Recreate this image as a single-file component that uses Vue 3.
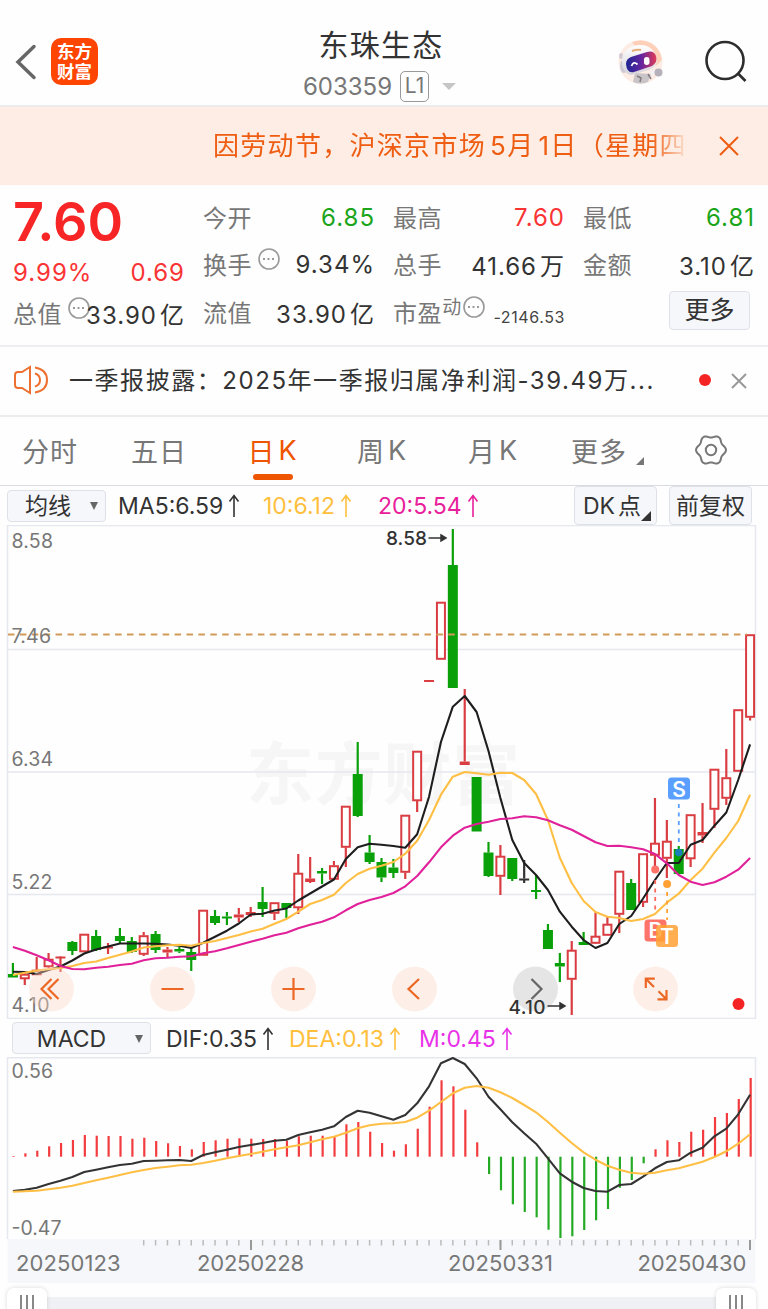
<template>
  <div class="stock-page">
    <header class="header">
      <div class="header__left">
        <svg class="header__back" width="22" height="36" viewBox="0 0 22 36">
          <path d="M19 2.500 3 18l16 15.500" />
        </svg>
        <div class="logo"><span>东方</span><span>财富</span></div>
      </div>
      <div class="header__center">
        <h1>东珠生态</h1>
        <div class="header__code">
          <span class="header__number">603359</span>
          <span class="header__level">L1</span>
          <i class="header__caret"></i>
        </div>
      </div>
      <div class="header__right">
        <svg width="48" height="48" viewBox="0 0 48 48">
          <defs>
            <linearGradient id="visor" x1="0" y1="0" x2="1" y2="0">
              <stop offset="0" stop-color="#1c2592" />
              <stop offset="0.5" stop-color="#63259f" />
              <stop offset="1" stop-color="#e23b56" />
            </linearGradient>
            <linearGradient id="shell" x1="0" y1="0" x2="0" y2="1">
              <stop offset="0" stop-color="#fff" />
              <stop offset="1" stop-color="#d5d3da" />
            </linearGradient>
          </defs>
          <circle cx="23.500" cy="24" r="22" fill="#fdece4" />
          <path d="M15 4a22 22 0 0 1 30 18l-6 6-18-16z" fill="#ffd0b8" />
          <path d="M18 35l-2 9q7 3 15 0l3-8z" fill="#c9c4c8" />
          <path d="M20 38l4 2-1 4M31 36l3 5" fill="none" stroke="#847b80" stroke-width="1.500" />
          <path d="M33 33l5-1 1 4-5 2z" fill="#f3f1f4" />
          <circle cx="41.500" cy="34.500" r="4" fill="#b6b1ba" />
          <ellipse cx="7" cy="28" rx="4" ry="7" fill="#cdc9d4" />
          <ellipse cx="4" cy="18" rx="2" ry="3" fill="#d2c8d2" />
          <path d="M5 25C4 14 12 8 22 7s18 7 18 16q-1 6-8 9l-18 5Q6 35 5 25z" fill="url(#shell)" />
          <path d="M15 13q5-2 9-1" fill="none" stroke="#e9ae77" stroke-width="2" />
          <path
            d="M9 26q0-5 5-7l16-5q7-2 9 4t-4 10l-18 6q-7 2-8-8z"
            fill="url(#visor)"
          />
          <path d="M14.500 28q2-5.500 6-1.500" fill="none" stroke="#fff" stroke-width="1.800" />
          <rect x="27" y="19" width="5.500" height="8" rx="2.700" fill="#fff" />
        </svg>
        <svg width="44" height="44" viewBox="0 0 44 44" class="header__search">
          <circle cx="21" cy="20.500" r="18.500" />
          <path d="m33.500 33 8 8" />
        </svg>
      </div>
    </header>

    <div class="banner">
      <div class="banner__text">因劳动节，沪深京市场<b>5</b>月<b>1</b>日（星期四）</div>
      <svg width="22" height="22" viewBox="0 0 22 22"><path d="m2 2 18 18M20 2 2 20" /></svg>
    </div>

    <section class="quote">
      <div class="quote__col">
        <div class="quote__price">7.60</div>
        <div class="quote__row quote__row--change is-up"><span>9.99%</span><span>0.69</span></div>
        <div class="quote__row quote__row--total">
          <label>总值</label>
          <svg class="dots" viewBox="0 0 22 22"><circle cx="11" cy="11" r="10" /><path d="M5 11h12" /></svg>
          <span>33.90<em>亿</em></span>
        </div>
      </div>
      <div class="quote__col">
        <div class="quote__row"><label>今开</label><span class="is-down">6.85</span></div>
        <div class="quote__row">
          <label>换手</label>
          <svg class="dots" viewBox="0 0 22 22"><circle cx="11" cy="11" r="10" /><path d="M5 11h12" /></svg>
          <span>9.34%</span>
        </div>
        <div class="quote__row"><label>流值</label><span>33.90<em>亿</em></span></div>
      </div>
      <div class="quote__col">
        <div class="quote__row"><label>最高</label><span class="is-up">7.60</span></div>
        <div class="quote__row"><label>总手</label><span>41.66<em>万</em></span></div>
        <div class="quote__row">
          <label>市盈<sup>动</sup></label>
          <svg class="dots dots--tight" viewBox="0 0 22 22"><circle cx="11" cy="11" r="10" /><path d="M5 11h12" /></svg>
          <span class="quote__small">-2146.53</span>
        </div>
      </div>
      <div class="quote__col">
        <div class="quote__row"><label>最低</label><span class="is-down">6.81</span></div>
        <div class="quote__row"><label>金额</label><span>3.10<em>亿</em></span></div>
        <div class="quote__row"><button class="quote__more">更多</button></div>
      </div>
    </section>

    <div class="news">
      <svg width="36" height="32" viewBox="0 0 36 32" class="news__icon">
        <path d="M17 3v26l-8-5H5q-3 0-3-3V11q0-3 3-3h4z" />
        <path d="M22 9.500q5 1.500 5 6.500t-5 6.500M22 3.500q12 2 12 12.500T22 28.500" />
      </svg>
      <p>一季报披露：<b>2025</b>年一季报归属净利润<b>-39.49</b>万<b>...</b></p>
      <i class="news__dot"></i>
      <svg width="18" height="18" viewBox="0 0 18 18" class="news__close"><path d="m2 2 14 14M16 2 2 16" /></svg>
    </div>

    <nav class="tabs">
      <div v-for="tab in tabs" :key="tab.name" class="tabs__item" :class="{ 'is-active': tab.active }">
        {{ tab.name }}<b v-if="tab.k">K</b><i v-if="tab.more" class="tabs__corner"></i>
      </div>
      <div class="tabs__item">
        <svg width="34" height="34" viewBox="-17 -17 34 34" class="tabs__gear">
          <polygon :points="gear" />
          <circle r="5.200" />
        </svg>
      </div>
    </nav>

    <div class="indicator">
      <button class="select select--ma">均线<i></i></button>
      <span class="indicator__value ma5">MA5:6.59<Arrow /></span>
      <span class="indicator__value ma10">10:6.12<Arrow /></span>
      <span class="indicator__value ma20">20:5.54<Arrow /></span>
      <div class="indicator__buttons">
        <button class="select select--dk"><b>DK</b>点<i></i></button>
        <button class="select select--fq">前复权</button>
      </div>
    </div>

    <svg class="chart" width="768" height="494" viewBox="0 525 768 494">
      <text class="watermark" x="246" y="799" textLength="274">东方财富</text>
      <path class="grid" d="M7.500 525.500h748v493h-748zM8 649.500h747M8 772h747M8 894.500h747" />

      <g v-for="(c, i) in candles" :key="i" :class="['candle', 'candle--' + c[0]]">
        <path v-if="c[1] < c[2]" :d="`M${x(i)} ${c[1]}V${c[2]}`" />
        <path v-if="c[4] > c[3]" :d="`M${x(i)} ${c[3]}V${c[4]}`" />
        <rect
          :x="x(i) - (c[0] === 'r' ? 4 : 5)"
          :y="c[2] + (c[0] === 'r' ? 0.7 : 0)"
          :width="c[0] === 'r' ? 8 : 10"
          :height="Math.max(c[3] - c[2] - (c[0] === 'r' ? 1.4 : 0), 2)"
        />
      </g>

      <path class="last-price" d="M8 634.500H747" />
      <polyline class="line line--ma5" :points="points(ma5)" />
      <polyline class="line line--ma10" :points="points(ma10)" />
      <polyline class="line line--ma20" :points="points(ma20)" />

      <g class="signal signal--s">
        <path d="M678.800 804v40" />
        <circle cx="678.800" cy="852.500" r="3.800" />
        <rect x="668" y="777.500" width="22" height="22" rx="3.500" />
        <text x="679" y="796.500">S</text>
      </g>
      <g class="signal signal--b">
        <path d="M655.200 880v34" />
        <circle cx="655.200" cy="869.500" r="4" />
        <rect x="644.500" y="919.500" width="22" height="22" rx="3.500" />
        <text x="655.500" y="938">B</text>
      </g>
      <g class="signal signal--t">
        <path d="M667.100 892v28" />
        <circle cx="667.100" cy="884" r="4" />
        <rect x="656" y="925" width="22" height="22" rx="3.500" />
        <text x="667" y="943.500">T</text>
      </g>

      <g class="scale">
        <text x="11.500" y="547.500" textLength="41.500">8.58</text>
        <text x="11.500" y="642.500" textLength="39.500">7.46</text>
        <text x="11.500" y="765.500" textLength="41.500">6.34</text>
        <text x="11.500" y="889" textLength="41">5.22</text>
        <text x="11.500" y="1011.500" textLength="38">4.10</text>
      </g>

      <g class="control">
        <circle v-for="cx in [51.5, 172.5, 293.5, 414.5, 655.5]" :key="cx" :cx="cx" cy="989" r="22.500" />
        <circle class="control__gray" cx="535.500" cy="989" r="22.500" />
        <path d="M51.500 979 41.500 989l10 10M58.500 979 48.500 989l10 10" />
        <path d="M161.500 989h22M282.500 989h22M293.500 978v22" />
        <path d="M419 979 408.500 989l10.500 10" />
        <path class="control__next" d="M531.500 979 541.500 989l-10 10" />
        <path d="M645.800 988v-9.300h9M646 979l8 8M657.500 999.300h9V990M666.500 999.300l-8-8" />
      </g>

      <g class="extreme">
        <text x="386" y="545" textLength="41">8.58</text>
        <path d="M428.500 538h13M441 535l5 3-5 3z" />
        <text x="508.500" y="1013.500" textLength="37">4.10</text>
        <path d="M547.500 1006h13M560 1003l5 3-5 3z" />
      </g>
      <circle cx="738.500" cy="1004" r="6" fill="#f42424" />
    </svg>

    <div class="indicator indicator--macd">
      <button class="select select--macd">MACD<i></i></button>
      <span class="indicator__value dif">DIF:0.35<Arrow /></span>
      <span class="indicator__value dea">DEA:0.13<Arrow /></span>
      <span class="indicator__value m">M:0.45<Arrow /></span>
    </div>

    <svg class="chart" width="768" height="182" viewBox="0 1057 768 182">
      <path class="grid" d="M7.500 1240V1057.700h748V1240" />
      <path
        v-for="(v, i) in macd"
        :key="i"
        :class="['bar', v < 410 ? 'bar--up' : 'bar--down']"
        :d="`M${x(i) + 0.6} 1156.700V${zoomed(v)}`"
      />
      <polyline class="line line--dif" :points="points(dif.map(zoomed))" />
      <polyline class="line line--ma10" :points="points(dea.map(zoomed))" />
      <g class="scale">
        <text x="11.500" y="1077.500" textLength="41.500">0.56</text>
        <text x="11.500" y="1235" textLength="50">-0.47</text>
      </g>
    </svg>

    <svg class="chart" width="768" height="44" viewBox="0 1239 768 44">
      <rect x="7.500" y="1239" width="748" height="44" fill="#f6f7fa" />
      <path v-for="n in 51" :key="n" class="tick" :d="`M${x(n + 10)} 1240v5.500`" />
      <path class="tick tick--major" d="M251 1240v10M500.500 1240v10M750 1240v10" />
      <g class="dates">
        <text x="16" y="1271" textLength="104.500">20250123</text>
        <text x="197" y="1271" textLength="107">20250228</text>
        <text x="448" y="1271" textLength="105">20250331</text>
        <text x="637.500" y="1271" textLength="109">20250430</text>
      </g>
    </svg>

    <div class="slider">
      <div class="slider__track">
        <div class="slider__handle"><i></i><i></i><i></i></div>
        <div class="slider__handle"><i></i><i></i><i></i></div>
      </div>
    </div>
  </div>
</template>

<script setup>
import { h } from "vue";

const Arrow = () =>
  h("svg", { class: "arrow", width: 12, height: 24, viewBox: "0 0 12 24" }, [
    h("path", { d: "M6 23V2M1.500 7.500 6 1.500l4.500 6", fill: "none", stroke: "currentColor", "stroke-width": 1.6 }),
  ]);

const tabs = [
  { name: "分时" },
  { name: "五日" },
  { name: "日", k: true, active: true },
  { name: "周", k: true },
  { name: "月", k: true },
  { name: "更多", more: true },
];

// six-lobed outline of the settings icon
const gear = Array.from({ length: 72 }, (_, n) => {
  const a = (n / 72) * Math.PI * 2;
  const r = 13.7 + 1.3 * Math.cos(6 * a);
  return `${(r * Math.cos(a)).toFixed(2)},${(r * Math.sin(a)).toFixed(2)}`;
}).join(" ");

const x = (i) => +(12.9 + i * 11.89).toFixed(2);
const points = (list) => list.map((y, i) => `${x(i)},${y}`).join(" ");
const zoomed = (v) => +(1020 + v / 3).toFixed(1);

// [kind, high, bodyTop, bodyBottom, low]; r = hollow up, s = solid up, g = down, k = flat
const candles = [
  ["g", 963, 974, 977.5, 977.5], ["r", 973, 974, 979, 985], ["r", 957, 970, 975, 975],
  ["r", 953, 959, 967, 968], ["s", 956, 956.5, 958, 972], ["g", 941, 942, 951, 955],
  ["r", 934, 934, 952, 952], ["g", 930, 936, 950, 951], ["s", 943, 946.5, 948, 954],
  ["g", 928, 936, 941, 943], ["g", 937, 941, 952, 953], ["r", 932, 935.5, 954.5, 956],
  ["g", 931, 934, 950, 953], ["s", 947, 949.5, 952.5, 957], ["g", 947, 949, 951.5, 953],
  ["g", 948, 952, 960, 971], ["r", 910, 910, 955.5, 955.5], ["g", 910, 916, 923, 925],
  ["g", 912, 916.5, 918, 925], ["s", 908, 914.5, 917.5, 922], ["s", 907, 912, 915, 917],
  ["g", 887, 902, 909, 917], ["r", 902.5, 902.5, 913.5, 920], ["g", 903, 903, 908, 918],
  ["r", 854, 873, 908, 914], ["s", 857, 878.5, 882, 883], ["g", 868, 871, 873.5, 884],
  ["r", 861, 865.5, 879.5, 879.5], ["r", 806, 806, 847.5, 867], ["g", 742, 774, 816, 817],
  ["g", 835, 852.5, 862, 864], ["g", 858, 862, 877.5, 882], ["g", 859, 867.5, 873, 878],
  ["r", 815, 815, 872.5, 879], ["r", 751, 751, 801, 812], ["s", 680, 680, 681.5, 681],
  ["r", 602, 602, 659.5, 659], ["g", 529, 565, 688, 688], ["s", 689, 761.5, 765, 765],
  ["g", 777, 777, 831.5, 831], ["g", 842, 852.5, 876, 877], ["r", 845, 856, 876.5, 895],
  ["g", 858, 858, 879, 881], ["k", 860, 878.5, 879.5, 883], ["g", 875, 890, 891.5, 899],
  ["g", 924, 930, 949, 949], ["g", 953, 963, 966.5, 982], ["r", 941, 950, 979.5, 1015],
  ["g", 932, 942, 945, 945], ["r", 912.5, 936, 943.5, 944], ["r", 917, 924, 935.5, 935],
  ["r", 871, 871, 914.5, 933], ["g", 879, 883, 910, 910], ["r", 853.5, 853.5, 902.5, 907],
  ["r", 798, 843, 855.5, 868], ["r", 820, 841, 858.5, 878], ["g", 846, 849, 874, 874],
  ["r", 814.5, 814.5, 859, 867], ["s", 803, 832, 835.5, 843], ["r", 769, 769, 809.5, 828],
  ["r", 749, 777.5, 798.5, 805], ["r", 709.5, 709.5, 771.5, 771], ["r", 634.5, 634.5, 717.5, 720.5],
];

const ma5 = [
  971.7, 972, 974, 970, 966.5, 960.5, 953.5, 949.5, 946.5, 943.5, 943.5, 943.5, 943.7, 944.5, 945.7,
  948, 942.7, 936.7, 930.7, 923.5, 914.5, 913.7, 910.5, 908.5, 900.5, 893.5, 886.5, 879.5, 859, 847.3,
  843.7, 844.7, 846, 847.7, 834.3, 796.7, 742, 706.7, 696, 712, 751, 798, 840, 863, 875, 890, 911.7,
  926.7, 940, 948, 943, 924, 916, 898.5, 880, 863, 863, 844.7, 840, 825.7, 812.5, 780, 744.3,
];
const ma10 = [
  975, 972.7, 970.5, 969.3, 968, 966, 963, 961.5, 958, 954.7, 951.5, 947.5, 946.3, 945.3, 944.7,
  945.7, 943, 941, 938, 935, 931.5, 928.7, 923.7, 919, 911.7, 904, 900, 894.7, 883, 874, 868.7, 865.7,
  862, 853.7, 840.7, 820, 794.7, 776.7, 772, 773.3, 774.7, 772.7, 773, 780, 794, 820, 857.7, 883, 901,
  912, 916.7, 918, 921, 919, 914, 902.7, 893.7, 880, 868.7, 852.7, 838, 821, 794.7,
];
const ma20 = [
  947, 950.7, 955.3, 960.3, 966, 969, 969.3, 967.7, 966.7, 965, 963.7, 960.3, 958.3, 957.7, 956.7,
  956.3, 953.3, 951.3, 948.3, 945, 941.7, 938.7, 935.3, 932.7, 928.3, 924.7, 921.7, 917.3, 910.3, 904,
  900, 897, 893, 886.3, 876, 862.3, 847.3, 835.7, 827.7, 824, 821.7, 819, 818.3, 816.3, 817.3, 820.3,
  825.3, 829.7, 836, 842.3, 846, 845.7, 847.3, 849.3, 854, 863.3, 875, 881.7, 885, 882.3, 876.7, 869.7, 858,
];

// MACD series on a 3x grid, zero at 410
const macd = [
  408, 400, 392, 379, 369, 360, 345, 347, 348, 348, 356, 353, 363, 370, 378, 388, 366, 361, 356, 355,
  356, 357, 357, 362, 349, 347, 347, 348, 313, 306, 335, 369, 392, 373, 326, 260, 181, 199, 269, 367,
  462, 511, 553, 576, 592, 629, 654, 649, 630, 601, 567, 503, 480, 430, 388, 361, 366, 335, 329, 291,
  279, 237, 174,
];
const dif = [
  513, 509, 503, 492, 482, 471, 456, 449, 442, 435, 431, 423, 422, 421, 420, 423, 405, 397, 389, 381,
  375, 369, 362, 359, 345, 337, 329, 319, 291, 272, 278, 289, 299, 285, 250, 199, 130, 114, 132, 175,
  230, 268, 307, 340, 371, 415, 460, 485, 504, 513, 515, 495, 492, 470, 445, 426, 421, 398, 383, 349,
  326, 283, 224,
];
const dea = [
  515, 514, 512, 508, 503, 497, 489, 481, 473, 465, 457, 450, 444, 440, 436, 434, 429, 422, 415, 408,
  402, 395, 388, 382, 376, 367, 358, 350, 338, 325, 316, 311, 310, 306, 293, 272, 246, 220, 203, 198,
  203, 217, 234, 255, 277, 306, 338, 369, 397, 419, 437, 449, 458, 461, 458, 451, 445, 435, 425, 411,
  394, 371, 343,
];
</script>

<style>
body {
  margin: 0;
  background: #fefefe;
}
</style>

<style scoped>
.stock-page {
  width: 768px;
  height: 1309px;
  overflow: hidden;
  background: #fefefe;
  color: #333;
  font-family: Inter, "Noto Sans CJK SC", sans-serif;
}

.stock-page * {
  box-sizing: border-box;
}

.stock-page svg {
  display: block;
  flex: none;
}

b,
em,
i {
  font-style: normal;
  font-weight: 400;
}

button {
  font-family: inherit;
}

.header {
  display: grid;
  grid-template-columns: 1fr 160px 1fr;
  height: 107px;
  border-bottom: 2px solid #ebebed;
}

.header__left {
  display: flex;
  align-items: center;
  gap: 14px;
  padding: 18px 0 0 15px;
}

.header__back {
  fill: none;
  stroke: #666;
  stroke-width: 3.5;
  stroke-linecap: round;
}

.logo {
  display: flex;
  flex-direction: column;
  align-items: center;
  justify-content: center;
  width: 47px;
  height: 47px;
  border-radius: 10px;
  background: #ff4502;
  color: #fff;
  font-size: 17.5px;
  font-weight: 700;
  line-height: 20px;
}

.header__center {
  display: flex;
  flex-direction: column;
  align-items: center;
}

.header__center h1 {
  margin: 24px 6px 0 0;
  font-size: 30px;
  font-weight: 400;
  line-height: 42px;
  letter-spacing: 1.2px;
  white-space: nowrap;
}

.header__code {
  display: flex;
  align-items: center;
  gap: 8px;
  margin: 5px 9px 0 0;
  color: #777;
}

.header__number {
  font-size: 24px;
  line-height: 30px;
}

.header__level {
  width: 29px;
  height: 31px;
  border: 1.5px solid #999;
  border-radius: 5px;
  font-size: 21px;
  line-height: 28px;
  text-align: center;
}

.header__caret {
  margin-left: 5px;
  border: 7px solid transparent;
  border-top-color: #c6c6c6;
  border-bottom: 0;
}

.header__right {
  display: flex;
  align-items: center;
  justify-content: flex-end;
  gap: 39px;
  padding: 18px 20px 0 0;
}

.header__search {
  fill: none;
  stroke: #2d2d2d;
  stroke-width: 2.6;
}

.banner {
  display: flex;
  align-items: center;
  justify-content: flex-end;
  gap: 28px;
  height: 78px;
  padding-right: 28px;
  background: #fdede4;
  color: #ee5d12;
}

.banner__text {
  width: 477px;
  font-size: 26px;
  line-height: 40px;
  letter-spacing: 1.3px;
  white-space: nowrap;
  mask-image: linear-gradient(90deg, #000 438px, transparent 476px);
}

.banner__text b {
  margin-left: 4px;
}

.banner svg {
  fill: none;
  stroke: #ee5d12;
  stroke-width: 2;
}

.quote {
  display: grid;
  grid-template-columns: 171px 171px 171px 171px;
  gap: 19px;
  height: 162px;
  padding: 8px 14px 0 13px;
  border-bottom: 2px solid #edeef2;
}

.quote__col {
  display: flex;
  flex-direction: column;
}

.quote__price {
  height: 57px;
  color: #f72525;
  font-size: 54px;
  font-weight: 600;
  line-height: 57px;
}

.quote__row {
  display: flex;
  align-items: center;
  height: 47.5px;
  padding-top: 1px;
  font-size: 24px;
  white-space: nowrap;
}

.quote__row--change {
  justify-content: space-between;
  height: 44px;
}

.quote__row--total {
  height: 38px;
}

.quote__row label {
  margin-top: -2px;
  color: #777;
  letter-spacing: 0.6px;
}

.quote__row > span {
  margin: 0 -1px 0 auto;
  letter-spacing: 1px;
}

.quote__row--change > span {
  margin-left: 0;
}

.quote__row em {
  margin-left: 3px;
}

.quote__row sup {
  font-size: 19px;
  line-height: 0;
  vertical-align: 8px;
}

.dots {
  width: 22px;
  height: 22px;
  margin: -11px -6px 0 6px;
  fill: none;
  stroke: #999;
  stroke-width: 1.6;
}

.dots path {
  stroke-width: 2;
  stroke-dasharray: 2 2.5;
}

.dots--tight {
  margin-left: 1px;
}

.quote__row .quote__small {
  padding-top: 10px;
  font-size: 16px;
  letter-spacing: 0.6px;
  color: #444;
}

.is-up {
  color: #fa3434;
}

.is-down {
  color: #1ba51b;
}

.quote__more {
  width: 81px;
  height: 39px;
  margin: -4px 4px 0 auto;
  padding: 0;
  border: 1px solid #dfe1e8;
  border-radius: 4px;
  background: #f6f7fa;
  color: #333;
  font-size: 25px;
  line-height: 36px;
}

.news {
  display: flex;
  align-items: center;
  height: 70px;
  padding: 0 20px 0 13px;
  border-bottom: 2px solid #ededee;
}

.news__icon {
  margin-top: -2px;
  fill: none;
  stroke: #ee7030;
  stroke-width: 2;
}

.news p {
  width: 616px;
  margin: -5px 0 0 20px;
  font-size: 24px;
  letter-spacing: 1.55px;
  white-space: nowrap;
}

.news__dot {
  width: 12px;
  height: 12px;
  margin: -2px 19px 0 auto;
  border-radius: 50%;
  background: #f42424;
}

.news__close {
  margin-top: -1px;
  fill: none;
  stroke: #999;
  stroke-width: 2;
}

.tabs {
  display: grid;
  grid-template-columns: 100px 118px 109px 110px 112px 117px 90px;
  height: 69px;
  border-bottom: 1px solid #d8dbe3;
}

.tabs__item {
  display: flex;
  align-items: center;
  justify-content: center;
  position: relative;
  padding-bottom: 2px;
  color: #777;
  font-size: 27px;
  letter-spacing: 1px;
}

.tabs__item b {
  margin-left: 3px;
}

.tabs__item.is-active {
  color: #ee5500;
}

.tabs__item.is-active::after {
  content: "";
  position: absolute;
  bottom: 5px;
  width: 40px;
  height: 6px;
  border-radius: 3px;
  background: #ee5500;
}

.tabs__corner {
  margin: 22px 0 0 9px;
  border: 4px solid #777;
  border-top-color: transparent;
  border-left-color: transparent;
}

.tabs__gear {
  fill: none;
  stroke: #777;
  stroke-width: 2;
}

.indicator {
  display: flex;
  align-items: center;
  height: 39px;
  padding: 0 16px 0 7px;
}

.indicator--macd {
  height: 38px;
  padding-left: 12px;
}

.indicator__value {
  display: flex;
  align-items: center;
  gap: 5px;
  padding-top: 1px;
  font-size: 23px;
  white-space: nowrap;
}

.ma5 {
  width: 145px;
  margin-left: 12px;
}

.ma10 {
  width: 115px;
  color: #ffbf3d;
}

.ma20 {
  color: #e8209b;
}

.dif {
  width: 123px;
  margin-left: 15px;
}

.dea {
  width: 130px;
  color: #ffbf3d;
}

.m {
  color: #e832e8;
}

.indicator__buttons {
  display: flex;
  gap: 12px;
  margin-left: auto;
}

.select {
  display: flex;
  align-items: center;
  justify-content: center;
  height: 32px;
  padding: 0;
  border: 1px solid #dfe1e8;
  border-radius: 4px;
  background: #f6f7fa;
  color: #333;
  font-size: 23px;
  line-height: 30px;
}

.select i {
  border: 4.5px solid transparent;
  border-top: 8px solid #666;
  border-bottom: 0;
}

.select--ma {
  width: 99px;
  padding-left: 10px;
}

.select--ma i {
  margin-left: 19px;
}

.select--macd {
  width: 139px;
  padding: 2px 0 0 17px;
}

.select--macd i {
  margin-left: 29px;
}

.select--dk,
.select--fq {
  width: 83px;
  height: 39px;
}

.select--dk {
  padding-right: 3px;
}

.select--dk b {
  margin-right: 3px;
}

.select--dk i {
  margin: 20px -6px 0 0;
  border: 5.5px solid #333;
  border-top-color: transparent;
  border-left-color: transparent;
}

.chart text {
  font-family: Inter, "Noto Sans CJK SC", sans-serif;
}

.watermark {
  fill: #f6f6f7;
  font-size: 68px;
  font-weight: 700;
}

.grid {
  fill: none;
  stroke: #e6e8ef;
  stroke-width: 1.5;
}

.candle path {
  stroke-width: 2.2;
}

.candle--r,
.candle--s {
  stroke: #d93d42;
}

.candle rect {
  stroke-width: 0;
}

.candle--r rect {
  fill: #fff;
  stroke-width: 2;
}

.candle--s rect {
  fill: #d93d42;
}

.candle--g {
  fill: #0aa00a;
  stroke: #0aa00a;
}

.candle--k {
  fill: #333;
  stroke: #333;
}

.last-price {
  stroke: #d19a58;
  stroke-width: 1.8;
  stroke-dasharray: 6.5 5.4;
}

.line {
  fill: none;
  stroke-width: 2.1;
  stroke-linejoin: round;
}

.line--ma5 {
  stroke: #1e1e1e;
}

.line--dif {
  stroke: #333;
}

.line--ma10 {
  stroke: #ffbf45;
}

.line--ma20 {
  stroke: #e0219a;
}

.signal path {
  stroke-width: 1.8;
  stroke-dasharray: 4 4.5;
}

.signal text {
  fill: #fff;
  stroke: none;
  font-size: 21px;
  font-weight: 600;
  text-anchor: middle;
}

.signal--s {
  fill: #5a9fff;
  stroke: #5a9fff;
}

.signal--s circle {
  fill: #1a80b8;
}

.signal--b {
  fill: #ff7468;
  stroke: #ff6a5c;
}

.signal--t {
  fill: #ffa033;
  stroke: #ffa033;
}

.signal--t rect {
  fill-opacity: 0.85;
}

.signal rect,
.signal circle {
  stroke: none;
}

.control circle {
  fill: #fdd9c8;
  fill-opacity: 0.4;
}

.control .control__gray {
  fill: #bbb;
  fill-opacity: 0.36;
}

.control path {
  fill: none;
  stroke: #ec6723;
  stroke-width: 2.2;
}

.control .control__next {
  stroke: #666;
}

.scale text {
  fill: #777;
  font-size: 19.5px;
}

.extreme text {
  fill: #333;
  font-size: 19px;
  font-weight: 500;
}

.extreme path {
  fill: #333;
  stroke: #333;
  stroke-width: 1.5;
}

.bar {
  stroke-width: 2.2;
}

.bar--up {
  stroke: #f23c3f;
}

.bar--down {
  stroke: #25aa25;
}

.tick {
  stroke: #bbb;
  stroke-width: 1.5;
}

.tick--major {
  stroke: #999;
  stroke-width: 2;
}

.dates text {
  fill: #777;
  font-size: 22px;
}

.slider {
  padding: 14px 12px 0 7px;
}

.slider__track {
  display: flex;
  align-items: flex-start;
  justify-content: space-between;
  height: 12px;
  background: #f0f1f4;
}

.slider__handle {
  display: flex;
  justify-content: center;
  gap: 4px;
  width: 40px;
  height: 32px;
  margin-top: -9px;
  padding-top: 7px;
  border-radius: 7px;
  background: #fff;
  box-shadow: 0 0 4px rgba(0, 0, 0, 0.15);
}

.slider__handle i {
  width: 2px;
  height: 16px;
  background: #888;
}
</style>
